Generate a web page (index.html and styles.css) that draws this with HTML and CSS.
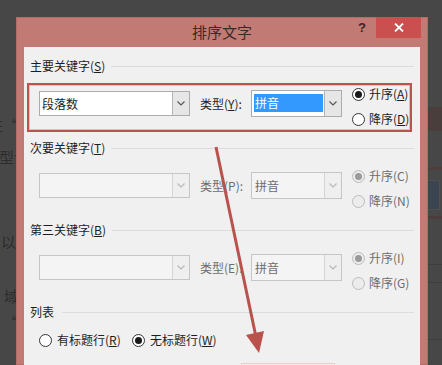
FILE: index.html
```html
<!DOCTYPE html>
<html lang="zh-CN">
<head>
<meta charset="utf-8">
<title>排序文字</title>
<link rel="stylesheet" href="styles.css">
</head>
<body>
<div class="desk">
  <div class="doc">
    <div class="docl l1">在“三</div>
    <div class="docl l2">型设</div>
    <div class="docl l3">以</div>
    <div class="docl l4">域</div>
    <div class="docl l5">“全</div>
  </div>
  <div class="side">
    <div class="s1"></div>
    <div class="s2"></div>
    <div class="s3"></div>
    <div class="s4"></div>
    <div class="s5"></div>
    <div class="s6"></div>
    <div class="s7"></div>
  </div>

  <div class="dialog">
    <div class="titlebar">
      <div class="tspacer"></div>
      <div class="title">排序文字</div>
      <div class="controls">
        <span class="help">?</span>
        <span class="close"><svg width="10" height="9" viewBox="0 0 10 9"><path d="M1 0.5 L9 8.5 M9 0.5 L1 8.5" stroke="#fff" stroke-width="1.8"/></svg></span>
      </div>
    </div>
    <div class="client">
      <section class="grp first">
        <div class="glabel"><span>主要关键字(<u>S</u>)</span><i class="rule"></i></div>
        <div class="krow">
          <div class="combo key"><span class="val">段落数</span><span class="btn"><svg width="8" height="5" viewBox="0 0 8 5"><path d="M0.5 0.5 L4 4 L7.5 0.5" fill="none" stroke="#555" stroke-width="1.2"/></svg></span></div>
          <span class="tlabel">类型(<u>Y</u>):</span>
          <div class="combo type"><span class="val sel">拼音</span><span class="btn"><svg width="8" height="5" viewBox="0 0 8 5"><path d="M0.5 0.5 L4 4 L7.5 0.5" fill="none" stroke="#555" stroke-width="1.2"/></svg></span></div>
          <div class="radios">
            <label class="radio on"><i class="circ"></i><span>升序(<u>A</u>)</span></label>
            <label class="radio"><i class="circ"></i><span>降序(<u>D</u>)</span></label>
          </div>
        </div>
      </section>

      <section class="grp dis">
        <div class="glabel"><span>次要关键字(<u>T</u>)</span><i class="rule"></i></div>
        <div class="krow">
          <div class="combo key"><span class="val"></span><span class="btn"><svg width="8" height="5" viewBox="0 0 8 5"><path d="M0.5 0.5 L4 4 L7.5 0.5" fill="none" stroke="#b8b8b8" stroke-width="1.2"/></svg></span></div>
          <span class="tlabel">类型(P):</span>
          <div class="combo type"><span class="val">拼音</span><span class="btn"><svg width="8" height="5" viewBox="0 0 8 5"><path d="M0.5 0.5 L4 4 L7.5 0.5" fill="none" stroke="#b8b8b8" stroke-width="1.2"/></svg></span></div>
          <div class="radios">
            <label class="radio on"><i class="circ"></i><span>升序(C)</span></label>
            <label class="radio"><i class="circ"></i><span>降序(N)</span></label>
          </div>
        </div>
      </section>

      <section class="grp dis">
        <div class="glabel"><span>第三关键字(<u>B</u>)</span><i class="rule"></i></div>
        <div class="krow">
          <div class="combo key"><span class="val"></span><span class="btn"><svg width="8" height="5" viewBox="0 0 8 5"><path d="M0.5 0.5 L4 4 L7.5 0.5" fill="none" stroke="#b8b8b8" stroke-width="1.2"/></svg></span></div>
          <span class="tlabel">类型(E):</span>
          <div class="combo type"><span class="val">拼音</span><span class="btn"><svg width="8" height="5" viewBox="0 0 8 5"><path d="M0.5 0.5 L4 4 L7.5 0.5" fill="none" stroke="#b8b8b8" stroke-width="1.2"/></svg></span></div>
          <div class="radios">
            <label class="radio on"><i class="circ"></i><span>升序(I)</span></label>
            <label class="radio"><i class="circ"></i><span>降序(G)</span></label>
          </div>
        </div>
      </section>

      <section class="grp list">
        <div class="glabel"><span>列表</span><i class="rule"></i></div>
        <div class="lrow">
          <label class="radio wide"><i class="circ"></i><span>有标题行(<u>R</u>)</span></label>
          <label class="radio on"><i class="circ"></i><span>无标题行(<u>W</u>)</span></label>
        </div>
      </section>

      <div class="btnrow"><span class="okbtn"></span></div>
    </div>
  </div>

  <div class="mark"></div>
  <svg class="arrow" width="442" height="365" viewBox="0 0 442 365">
    <line x1="216" y1="147" x2="256" y2="337" stroke="#b9514d" stroke-width="3"/>
    <polygon points="259,353 246,335 264,331" fill="#b9514d"/>
  </svg>
</div>
</body>
</html>
```

FILE: styles.css
```css
html, body {
  margin: 0;
  padding: 0;
}
body {
  width: 442px;
  height: 365px;
  overflow: hidden;
  background: #474747;
  font-family: "Noto Sans CJK SC", "Noto Sans", sans-serif;
  font-size: 12px;
  color: #1e1e1e;
}
.desk {
  position: relative;
  width: 442px;
  height: 365px;
  overflow: hidden;
  display: flex;
  justify-content: space-between;
}

/* background document */
.doc {
  width: 16px;
  overflow: hidden;
}
.docl {
  white-space: nowrap;
  font-size: 15px;
  line-height: 16px;
  height: 16px;
  color: #2c2c2c;
}
.l1 { margin-top: 117px; text-indent: -12px; }
.l2 { margin-top: 16px; text-indent: -1px; }
.l3 { margin-top: 69px; text-indent: 1px; }
.l4 { margin-top: 38px; text-indent: 4px; }
.l5 { margin-top: 10px; text-indent: 3px; }

.side {
  width: 14px;
  display: flex;
  flex-direction: column;
}
.s1 { margin-top: 107px; height: 24px; background: #4a3e3d; }
.s2 { margin-top: 36px; height: 3px; background: #4f3e3d; }
.s3 { margin-top: 10px; height: 28px; background: #3a4551; border: 1px solid #505050; border-left: 0; margin-right: 2px; }
.s4 { margin-top: 6px; height: 3px; background: #4c3d3c; }
.s5 { margin-top: 45px; height: 1px; background: #3d3d3d; }
.s6 { margin-top: 17px; height: 1px; background: #3e3e3e; }
.s7 { margin-top: 56px; height: 1px; background: #3d3d3d; }

/* dialog window */
.dialog {
  position: absolute;
  left: 16px;
  top: 17px;
  width: 412px;
  height: 348px;
  background: #c17b74;
  box-shadow: inset 0 0 0 1px #b46d66;
  display: flex;
  flex-direction: column;
}
.titlebar {
  height: 30px;
  display: flex;
  align-items: flex-start;
}
.tspacer { width: 75px; }
.title {
  flex: 1;
  text-align: center;
  font-size: 15px;
  line-height: 30px;
  color: #3b2a29;
}
.controls {
  width: 75px;
  display: flex;
  align-items: flex-start;
}
.help {
  width: 18px;
  text-align: center;
  font-weight: bold;
  font-size: 13px;
  line-height: 22px;
  color: #3a2423;
  font-family: "Liberation Sans", sans-serif;
}
.close {
  margin-left: 5px;
  width: 45px;
  height: 21px;
  background: #c9504e;
  display: flex;
  align-items: center;
  justify-content: center;
}
.client {
  margin: 0 8px;
  height: 318px;
  overflow: hidden;
  background: #f0f0f0;
  padding: 0 6px;
  display: flex;
  flex-direction: column;
}

.grp { margin-top: 14px; flex: none; }
.grp.first { margin-top: 11px; }
.glabel {
  height: 16px;
  line-height: 16px;
  display: flex;
  align-items: center;
  white-space: nowrap;
}
.rule {
  flex: 1;
  height: 1px;
  background: #dcdcdc;
  margin-left: 6px;
}
.list .rule { margin-left: 8px; }

.krow {
  margin-top: 16px;
  height: 36px;
  padding-left: 9px;
  display: flex;
  align-items: flex-start;
}
.combo {
  box-sizing: border-box;
  border: 1px solid #acacac;
  background: #fff;
  display: flex;
}
.combo.key {
  width: 151px;
  height: 25px;
  margin-top: 1px;
}
.combo.type {
  width: 91px;
  height: 27px;
}
.val {
  flex: 1;
  padding-left: 2px;
  line-height: 23px;
  white-space: nowrap;
}
.type .val { line-height: 25px; padding-left: 3px; }
.type .val.sel {
  margin: 3px 1px 4px 2px;
  padding-left: 1px;
  line-height: 18px;
  background: #3399ff;
  color: #fff;
}
.btn {
  width: 16px;
  border-left: 1px solid #b4b4b4;
  background: #e6e6e6;
  display: flex;
  align-items: center;
  justify-content: center;
}
.tlabel {
  margin-left: 10px;
  width: 51px;
  line-height: 27px;
  white-space: nowrap;
}
.radios {
  margin-left: 10px;
  margin-top: -4px;
  display: flex;
  flex-direction: column;
  gap: 9px;
}
.radio {
  display: flex;
  align-items: center;
  height: 16px;
  line-height: 16px;
  white-space: nowrap;
}
.circ {
  box-sizing: border-box;
  width: 13px;
  height: 13px;
  border: 1px solid #333;
  border-radius: 50%;
  background: #fff;
  margin-right: 4px;
  display: flex;
  align-items: center;
  justify-content: center;
}
.radio.on .circ::after {
  content: "";
  width: 7px;
  height: 7px;
  border-radius: 50%;
  background: #1a1a1a;
}

/* disabled groups */
.dis .krow { color: #6d6d6d; }
.dis .combo { border-color: #c6c6c6; background: #f4f4f4; }
.dis .btn { border-left-color: #d4d4d4; background: #efefef; }
.dis .circ { border-color: #bcbcbc; background: #ececec; }
.dis .radio.on .circ::after { background: #9a9a9a; }

.lrow {
  margin-top: 12px;
  padding-left: 9px;
  display: flex;
}
.lrow .circ { margin-right: 5px; }
.radio.wide { width: 93px; }

.btnrow {
  margin-top: 15px;
  padding-left: 211px;
  display: flex;
  flex: none;
}
.okbtn {
  width: 94px;
  height: 23px;
  box-sizing: border-box;
  border: 1px solid #ecd0cd;
  background: #f4eceb;
}

/* annotation overlays */
.mark {
  position: absolute;
  left: 27px;
  top: 83px;
  width: 385px;
  height: 49px;
  box-sizing: border-box;
  border: 2px solid #bb5450;
  box-shadow: inset 0 0 0 1px #e8b9b5;
}
.arrow {
  position: absolute;
  left: 0;
  top: 0;
  pointer-events: none;
}
```
